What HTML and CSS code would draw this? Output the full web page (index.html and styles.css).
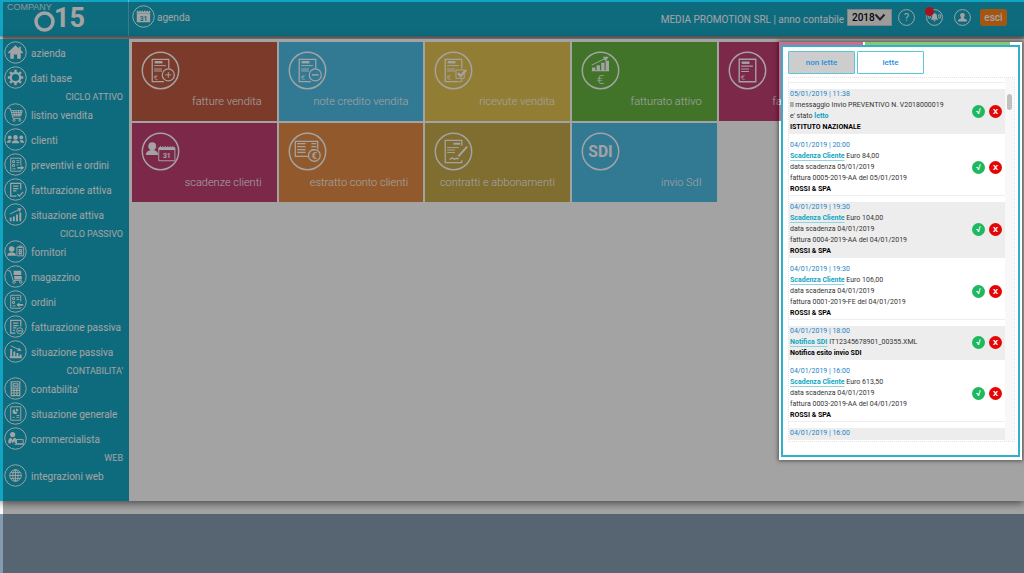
FILE: index.html
```html
<!DOCTYPE html>
<html lang="it">
<head>
<meta charset="utf-8">
<title>Company 015</title>
<link rel="stylesheet" href="styles.css">
</head>
<body>
<svg class="defs" aria-hidden="true">
  <symbol id="ring" viewBox="0 0 24 24"><circle cx="12" cy="12" r="11.2"/></symbol>
  <symbol id="i-cal" viewBox="0 0 24 24"><path class="f" d="M5 6h14v3H5zM5 9.500h14v8.500H5z"/><path class="cut" d="M7 5v2M9.500 5v2M12 5v2M14.500 5v2M17 5v2"/><text class="cutt" x="12" y="16.200" text-anchor="middle" font-size="7">31</text></symbol>
  <symbol id="i-home" viewBox="0 0 24 24"><path class="f" d="M12 4.500 4 12l1 1 1.500-1v6.500H10.300V14h3.400v4.500h3.800V12l1.500 1 1-1-2.500-2.500V6h-2v1.700z"/></symbol>
  <symbol id="i-gear" viewBox="0 0 24 24"><circle cx="12" cy="12" r="4.900" stroke-width="2.300"/><path stroke-width="2.600" d="M12 4v2.500M12 17.500V20M4 12h2.500M17.500 12H20M6.300 6.300l1.800 1.800M15.900 15.900l1.800 1.800M6.300 17.700l1.800-1.800M15.900 8.100l1.800-1.800"/></symbol>
  <symbol id="i-cart" viewBox="0 0 24 24"><path d="M4 5.500h2.500L9.500 16h8M7.300 8H19l-1.700 5.500H9M8 10h10.500M8.500 12H18M10 8l1 5.500M12.500 8l.5 5.500M15 8v5.500M17.300 8l-1 5.500"/><circle cx="10.500" cy="18" r="1.100"/><circle cx="16.500" cy="18" r="1.100"/></symbol>
  <symbol id="i-people" viewBox="0 0 24 24"><g class="f"><circle cx="12" cy="9.800" r="2.400"/><path d="M8 16q0-3 4-3.300 4 .3 4 3.300z"/><circle cx="6" cy="9.800" r="2"/><path d="M3 15.500q0-2.500 3-3 1.500 0 1.600.6-.9 1-1 2.400z"/><circle cx="18" cy="9.800" r="2"/><path d="M21 15.500q0-2.500-3-3-1.500 0-1.600.6.900 1 1 2.400z"/></g></symbol>
  <symbol id="i-quote" viewBox="0 0 24 24"><path d="M17.500 13V5.500H7v13.500h10.500v-1M9 8h2v2H9zM9 12h2v2H9zM13 8h3M13 10h3M13 12.500h2M9 16.500h3"/><path class="f" d="M14 14.500h4V13l3 2.500-3 2.500v-1.500h-4z"/></symbol>
  <symbol id="i-order" viewBox="0 0 24 24"><path d="M17.500 12V5.500H7v13.500h10.500v-1M9 8h2v2H9zM9 12h2v2H9zM13 8h3M13 10h3M9 16.500h3"/><path class="f" d="M20 14.500h-4V13l-3 2.500 3 2.500v-1.500h4z"/></symbol>
  <symbol id="i-inv" viewBox="0 0 24 24"><path stroke-width="1.300" d="M17.500 12V5.500H7v13.500h6M9.500 8.500H15M9.500 11H15M9.500 13.500h3.500M14 17l2 2 4-4.500"/></symbol>
  <symbol id="i-invp" viewBox="0 0 24 24"><path stroke-width="1.300" d="M17.500 12V5.500H7v13.500h5M9.500 8.500H15M9.500 11H15M9.500 13.500h3.500M9.500 16h2M14.500 16.500h4"/><circle cx="16.500" cy="16.500" r="3.200"/></symbol>
  <symbol id="i-up" viewBox="0 0 24 24"><path stroke-width="2" d="M7 19v-4M10.300 19v-5M13.600 19v-7M17 19v-9"/><path d="M6 11.500 15.500 7"/><path class="f" d="m14 5.300 4.500.5-2.500 3.500z"/></symbol>
  <symbol id="i-down" viewBox="0 0 24 24"><path stroke-width="2" d="M7.500 18V9.500M10.800 18v-6M14 18v-4.500M17.300 18v-3M6 18h12.500"/><path d="m7 6 8 3.800"/><path class="f" d="m15.500 7.800 3 3.500-4.500.2z"/></symbol>
  <symbol id="i-supp" viewBox="0 0 24 24"><g class="f"><circle cx="8" cy="9.500" r="2.900"/><path d="M3.500 16.500q0-3 3-3.500h3q3 .5 3 3.500z"/></g><path d="M13.500 7.500h7v9h-7zM15.500 6.300h3v1.500h-3zM15 10h4M15 12h4M15 14h4M16.300 9.500v6M18 9.500v6"/></symbol>
  <symbol id="i-trolley" viewBox="0 0 24 24"><path d="M4 6h2.500L9.500 16H18"/><path class="f" d="M10 6h8v4.500h-8zM10.500 11.500h8V15h-7.500z"/><circle cx="10.500" cy="17.800" r="1.300"/><circle cx="17.500" cy="17.800" r="1.300"/></symbol>
  <symbol id="i-calc" viewBox="0 0 24 24"><path stroke-width="1.200" d="M7.500 5h9v14.500h-9zM9.500 7h5v2.500h-5zM7.500 11.500h9M7.500 14h9M7.500 16.700h9M10.500 11.500v8M13.500 11.500v8"/></symbol>
  <symbol id="i-report" viewBox="0 0 24 24"><path d="M7 5h10.500v14H7zM13 14h3M13 16h3M9 16h2"/><path class="f" d="M11.500 7.500a2.600 2.600 0 1 0 2.600 2.600h-2.600zM12.500 6.700a2.600 2.600 0 0 1 2.600 2.600h-2.600z"/></symbol>
  <symbol id="i-acct" viewBox="0 0 24 24"><g class="f"><circle cx="9" cy="7.800" r="2.700"/><path d="M4.500 17v-3q.5-2.500 3-2.700L9 13.500l1.500-2.200q2 .2 2.800 1.700V17h-2v-2.500L9 17l-1.500-3V17z"/></g><path d="M13 13h7v4.500h-7zM11 18h10"/></symbol>
  <symbol id="i-globe" viewBox="0 0 24 24"><circle cx="12" cy="12" r="6"/><ellipse cx="12" cy="12" rx="2.800" ry="6"/><path d="M6 12h12M12 6v12M7 9h10M7 15h10"/></symbol>
  <symbol id="i-bell" viewBox="0 0 24 24"><path class="f" d="M12 6q3.500.3 3.500 5 0 2.500 1.500 4H7q1.500-1.500 1.500-4 0-4.700 3.500-5zM10.500 16h3q-.3 1.800-1.500 1.800t-1.500-1.800z"/><path d="M6.500 8q-1.500 2.500 0 5M4.500 7q-2 3.500 0 7M17.500 8q1.500 2.500 0 5M19.500 7q2 3.500 0 7"/></symbol>
  <symbol id="i-user" viewBox="0 0 24 24"><path class="f" d="M12 5.500c4.300 0 3.700 4.500 1.700 7 0 1.500 4.800 1.500 4.800 4.500v.8h-13V17c0-3 4.800-3 4.800-4.500-2-2.500-2.600-7 1.700-7z"/></symbol>
  <symbol id="b-doc" viewBox="0 0 40 40"><path stroke-width="1.300" d="M28.500 18V8.500H11.500v23h12"/><path d="M13.500 15h12M13.500 18.500h8M13.500 20.500h8"/><path stroke-width="2.500" d="M14 11.500h8"/><text class="ft" x="13" y="29.500" font-size="8">€</text></symbol>
  <symbol id="b-plus" viewBox="0 0 40 40"><use href="#b-doc"/><circle cx="28" cy="24.500" r="6.200" stroke-width="1.300"/><path d="M28 21.500v6M25 24.500h6"/></symbol>
  <symbol id="b-minus" viewBox="0 0 40 40"><use href="#b-doc"/><circle cx="28" cy="24.500" r="6.200" stroke-width="1.300"/><path stroke-width="1.400" d="M24.500 24.500h7"/></symbol>
  <symbol id="b-check" viewBox="0 0 40 40"><use href="#b-doc"/><path d="M22.500 19.500h8.500v8.500h-8.500zM28.500 28v3.500h-6"/><path stroke-width="2.400" d="m24.500 22.500 2.800 3.200 5.700-6.200"/></symbol>
  <symbol id="b-chart" viewBox="0 0 40 40"><path stroke-width="3.400" d="M13 20.500V17M17.700 20.500v-6M22.400 20.500v-8.500M27 20.500V10"/><path d="M11 20.300h18M11 14.500 24 8"/><path class="f" d="m22.500 6 6-.2-3.500 5z"/><text class="ft" x="20" y="34" font-size="14" text-anchor="middle">€</text></symbol>
  <symbol id="b-bill" viewBox="0 0 40 40"><path stroke-width="1.400" d="M11.500 8.500h17v23h-17z"/><path stroke-width="2.500" d="M14 12h8"/><path stroke-width="1.200" d="M13.500 15.500h12M13.500 18.500h8M13.500 21h8"/><text class="ft" x="13" y="29.500" font-size="8">€</text></symbol>
  <symbol id="b-due" viewBox="0 0 40 40"><g class="f"><circle cx="11.500" cy="14.500" r="4"/><path d="M5 23.500q0-4 5-5h3q4.500 1 4.500 5z"/><path d="M18 15.500h17v3H18z"/></g><path d="M18.200 17h16.600v12.500H18.200zM20 14.500v1.500M22.500 14.500v1.500M25 14.500v1.500M27.500 14.500v1.500M30 14.500v1.500M32.500 14.500v1.500"/><text class="ft b" x="26.500" y="26.500" font-size="7" text-anchor="middle">31</text></symbol>
  <symbol id="b-stmt" viewBox="0 0 40 40"><path stroke-width="1.300" d="M30.500 18V9.500h-23V25h13.500"/><path stroke-width="1.300" d="M9.500 12h8.500M9.500 15h8.500M9.500 18h8.500M9.500 21h8.500M24 12h5M24 15h5M24 18h4"/><circle cx="27" cy="24" r="6" stroke-width="1.300"/><text class="ft b" x="27" y="27.500" font-size="10" text-anchor="middle">€</text></symbol>
  <symbol id="b-sign" viewBox="0 0 40 40"><path stroke-width="1.300" d="M28.500 14V8.500h-17v23h17v-2.500"/><path stroke-width="2.200" d="M20 12h7M25 25l9-10"/><path d="M13.500 16h12M13.500 18.500h8M13.500 21h8"/><path stroke-width="1.400" d="m16 28 3-1.500 1.500 1.500 2.500-1 2.500.5"/></symbol>
  <symbol id="b-sdi" viewBox="0 0 40 40"><text class="ft b" x="20" y="25.500" font-size="16" text-anchor="middle">SDI</text></symbol>
</svg>

<div class="page">
  <header class="topbar">
    <a class="brand" href="#" aria-label="Company 015">
      <svg class="logo" viewBox="0 0 84 36">
        <text x="0" y="10" class="logo-name">COMPANY</text>
        <circle class="logo-o" cx="37.500" cy="21.500" r="8.500"/>
        <text x="47" y="27" class="logo-num">15</text>
      </svg>
    </a>
    <a class="agenda" href="#"><svg class="ico"><use href="#ring"/><use href="#i-cal"/></svg><span>agenda</span></a>
    <div class="tools">
      <label class="year" for="anno">MEDIA PROMOTION SRL | anno contabile</label>
      <span class="pick"><select id="anno"><option>2018</option></select><svg class="chev" viewBox="0 0 12 8"><path d="m1.500 1.500 4.500 5 4.500-5"/></svg></span>
      <button class="tool" aria-label="aiuto"><svg viewBox="0 0 24 24"><use href="#ring"/><text class="ft" x="12" y="17.500" font-size="16" text-anchor="middle">?</text></svg></button>
      <button class="tool" aria-label="notifiche"><svg viewBox="0 0 24 24"><use href="#ring"/><use href="#i-bell"/></svg><i class="dot"></i></button>
      <button class="tool" aria-label="profilo"><svg viewBox="0 0 24 24"><use href="#ring"/><use href="#i-user"/></svg></button>
      <button class="exit">esci</button>
    </div>
  </header>

  <div class="main">
    <nav class="side">
      <a href="#"><svg class="ico"><use href="#ring"/><use href="#i-home"/></svg><span>azienda</span></a>
      <a href="#"><svg class="ico"><use href="#ring"/><use href="#i-gear"/></svg><span>dati base</span></a>
      <h2>CICLO ATTIVO</h2>
      <a href="#"><svg class="ico"><use href="#ring"/><use href="#i-cart"/></svg><span>listino vendita</span></a>
      <a href="#"><svg class="ico"><use href="#ring"/><use href="#i-people"/></svg><span>clienti</span></a>
      <a href="#"><svg class="ico"><use href="#ring"/><use href="#i-quote"/></svg><span>preventivi e ordini</span></a>
      <a href="#"><svg class="ico"><use href="#ring"/><use href="#i-inv"/></svg><span>fatturazione attiva</span></a>
      <a href="#"><svg class="ico"><use href="#ring"/><use href="#i-up"/></svg><span>situazione attiva</span></a>
      <h2>CICLO PASSIVO</h2>
      <a href="#"><svg class="ico"><use href="#ring"/><use href="#i-supp"/></svg><span>fornitori</span></a>
      <a href="#"><svg class="ico"><use href="#ring"/><use href="#i-trolley"/></svg><span>magazzino</span></a>
      <a href="#"><svg class="ico"><use href="#ring"/><use href="#i-order"/></svg><span>ordini</span></a>
      <a href="#"><svg class="ico"><use href="#ring"/><use href="#i-invp"/></svg><span>fatturazione passiva</span></a>
      <a href="#"><svg class="ico"><use href="#ring"/><use href="#i-down"/></svg><span>situazione passiva</span></a>
      <h2>CONTABILITA'</h2>
      <a href="#"><svg class="ico"><use href="#ring"/><use href="#i-calc"/></svg><span>contabilita'</span></a>
      <a href="#"><svg class="ico"><use href="#ring"/><use href="#i-report"/></svg><span>situazione generale</span></a>
      <a href="#"><svg class="ico"><use href="#ring"/><use href="#i-acct"/></svg><span>commercialista</span></a>
      <h2>WEB</h2>
      <a href="#"><svg class="ico"><use href="#ring"/><use href="#i-globe"/></svg><span>integrazioni web</span></a>
    </nav>
    <main class="tiles">
      <a class="tile rust" href="#"><svg class="big"><use class="rim" href="#ring"/><use href="#b-plus"/></svg><span>fatture vendita</span></a>
      <a class="tile sky" href="#"><svg class="big"><use class="rim" href="#ring"/><use href="#b-minus"/></svg><span>note credito vendita</span></a>
      <a class="tile gold" href="#"><svg class="big"><use class="rim" href="#ring"/><use href="#b-check"/></svg><span>ricevute vendita</span></a>
      <a class="tile green" href="#"><svg class="big"><use class="rim" href="#ring"/><use href="#b-chart"/></svg><span>fatturato attivo</span></a>
      <a class="tile plum" href="#"><svg class="big"><use class="rim" href="#ring"/><use href="#b-bill"/></svg><span>fatture acquisto</span></a>
      <a class="tile green" href="#" aria-label="fatturato"></a>
      <a class="tile plum" href="#"><svg class="big"><use class="rim" href="#ring"/><use href="#b-due"/></svg><span>scadenze clienti</span></a>
      <a class="tile orange" href="#"><svg class="big"><use class="rim" href="#ring"/><use href="#b-stmt"/></svg><span>estratto conto clienti</span></a>
      <a class="tile olive" href="#"><svg class="big"><use class="rim" href="#ring"/><use href="#b-sign"/></svg><span>contratti e abbonamenti</span></a>
      <a class="tile sky" href="#"><svg class="big"><use class="rim" href="#ring"/><use href="#b-sdi"/></svg><span>invio SdI</span></a>
    </main>
  </div>
  <footer class="foot"></footer>

  <div class="veil">
    <div class="spot">
      <section class="panel" aria-label="notifiche">
        <div class="tabs"><button class="on">non lette</button><button>lette</button></div>
        <div class="list">
          <div class="rows">
            <article class="note first"><div class="txt"><b>VERDI MARIO</b></div></article>
            <article class="note alt"><div class="txt"><time>05/01/2019 | 11:38</time><p>Il messaggio Invio PREVENTIVO N. V2018000019</p><p>e' stato <strong>letto</strong></p><b>ISTITUTO NAZIONALE</b></div><button class="ok">√</button><button class="no">X</button></article>
            <article class="note"><div class="txt"><time>04/01/2019 | 20:00</time><p><a href="#">Scadenza Cliente</a> Euro 84,00</p><p>data scadenza 05/01/2019</p><p>fattura 0005-2019-AA del 05/01/2019</p><b>ROSSI &amp; SPA</b></div><button class="ok">√</button><button class="no">X</button></article>
            <article class="note alt"><div class="txt"><time>04/01/2019 | 19:30</time><p><a href="#">Scadenza Cliente</a> Euro 104,00</p><p>data scadenza 04/01/2019</p><p>fattura 0004-2019-AA del 04/01/2019</p><b>ROSSI &amp; SPA</b></div><button class="ok">√</button><button class="no">X</button></article>
            <article class="note"><div class="txt"><time>04/01/2019 | 19:30</time><p><a href="#">Scadenza Cliente</a> Euro 106,00</p><p>data scadenza 04/01/2019</p><p>fattura 0001-2019-FE del 04/01/2019</p><b>ROSSI &amp; SPA</b></div><button class="ok">√</button><button class="no">X</button></article>
            <article class="note alt"><div class="txt"><time>04/01/2019 | 18:00</time><p><a href="#">Notifica SDI</a> IT12345678901_00355.XML</p><b>Notifica esito invio SDI</b></div><button class="ok">√</button><button class="no">X</button></article>
            <article class="note"><div class="txt"><time>04/01/2019 | 16:00</time><p><a href="#">Scadenza Cliente</a> Euro 613,50</p><p>data scadenza 04/01/2019</p><p>fattura 0003-2019-AA del 04/01/2019</p><b>ROSSI &amp; SPA</b></div><button class="ok">√</button><button class="no">X</button></article>
            <article class="note alt"><div class="txt"><time>04/01/2019 | 16:00</time></div></article>
          </div>
          <div class="track"><i class="thumb"></i></div>
        </div>
      </section>
    </div>
  </div>
</div>
</body>
</html>
```
FILE: styles.css
```css
* { box-sizing: border-box; }
body { margin: 0; font-family: Roboto, "Liberation Sans", sans-serif; font-size: 10px; }
a { color: inherit; text-decoration: none; }
button { font: inherit; padding: 0; border: 0; background: none; color: inherit; }
p, h2 { margin: 0; }
svg { fill: none; stroke: #fff; stroke-width: 1; display: block; }
text { font-family: Roboto, sans-serif; }
.defs { display: none; }
.f { fill: #fff; stroke: none; }
.ft { fill: #fff; stroke: none; }
.b { font-weight: 700; }
.cut { stroke: #0fa5c3; }
.cutt { fill: #0fa5c3; stroke: none; font-weight: 700; }

.page { position: relative; min-height: 100vh; display: flex; flex-direction: column; background: #fff; overflow: hidden; }
.topbar { display: flex; height: 36px; background: #0fa5c3; color: #fff; box-shadow: 0 1px 4px 1px rgba(0, 0, 0, .6); margin-bottom: 3px; }
.brand { width: 129px; border-right: 1px solid #58bfd4; padding-left: 7px; }
.logo { width: 84px; height: 36px; }
.logo-name { font-family: "Liberation Sans", sans-serif; font-size: 9px; fill: #d5eef4; stroke: none; }
.logo-o { stroke-width: 3.5; }
.logo-num { font-family: "Liberation Sans Narrow", Roboto, sans-serif; font-size: 27px; font-weight: 700; fill: #fff; stroke: none; }
.agenda { display: flex; align-items: center; gap: 2px; padding: 0 0 4px 3px; }
.agenda span { padding-top: 3px; }
.ico { width: 23px; height: 23px; flex: none; }
.tools { margin-left: auto; display: flex; align-items: center; padding: 0 17px 2px 0; }
.year { padding: 4px 3px 0 0; }
.pick { position: relative; margin-right: 6px; }
.pick select { appearance: none; display: block; width: 45px; height: 17px; padding: 0 0 0 4px; border: 1px solid #ccc; border-radius: 0; background: #f4f4f4; color: #000; font: 500 10px Roboto, sans-serif; }
.chev { position: absolute; right: 6px; top: 4px; width: 12px; height: 8px; stroke: #333; stroke-width: 2; pointer-events: none; }
.tool { position: relative; width: 17px; height: 17px; margin-right: 11px; }
.tool svg { width: 17px; height: 17px; stroke-width: 1.4; }
.dot { position: absolute; left: -1px; top: -2px; width: 9px; height: 9px; border-radius: 50%; background: #ff1830; }
.exit { width: 27px; height: 17px; margin-left: -2px; border-radius: 3px; background: #ff8416; font-weight: 500; }

.main { display: flex; box-shadow: 0 2px 8px rgba(0, 0, 0, .6); background: #fff; }
.side { width: 129px; padding: 1px 6px 13px 4px; background: #0fa5c3; color: #fff; }
.side a { display: flex; align-items: center; gap: 4px; height: 25px; white-space: nowrap; }
.side span { padding-top: 2px; }
.side h2 { height: 12px; line-height: 15px; font-size: 9px; font-weight: 400; text-align: right; }
.tiles { flex: 1; display: grid; grid-template-columns: repeat(6, 1fr); grid-auto-rows: 79px; align-content: start; gap: 2px; padding: 3px 14px 0 3px; color: #fff; font-weight: 300; }
.tile { display: flex; flex-direction: column; justify-content: space-between; padding: 9px 15px 11px 9px; white-space: nowrap; }
.tile span { align-self: flex-end; line-height: 16px; font-size: 11px; }
.big { width: 39px; height: 39px; }
.rim { stroke-width: .9; }
.rust { background: #bf563c; }
.sky { background: #49bde7; }
.gold { background: #e4c24c; }
.green { background: #61b43b; }
.plum { background: #c1396d; }
.orange { background: #e48a40; }
.olive { background: #c7a846; }
.foot { flex: 1; margin-top: 13px; background: #839baf; position: relative; }

.veil { position: absolute; inset: 2px 0 0 3px; overflow: hidden; }
.spot { position: absolute; top: 40px; right: 2px; padding: 3px 2px 3px 2px; width: 243px; background: rgba(255, 255, 255, .25); box-shadow: 0 0 0 2000px rgba(12, 12, 12, .38), 0 0 4px 1px rgba(0, 0, 0, .5); }
.panel { border: 2px solid #2fb0cb; background: #fff; padding: 4px 3px 13px 5px; }
.tabs { display: flex; gap: 2px; margin-bottom: 3px; color: #1e8fdc; font-size: 8px; font-weight: 500; }
.tabs button { width: 67px; height: 23px; border: 1px solid #5cc5d8; border-radius: 1px; }
.tabs .on { background: #cdcdcd; }
.list { display: flex; height: 365px; border: 1px dotted #e2e2e2; overflow: hidden; font-size: 7px; line-height: 11px; color: #333; }
.rows { flex: 1; display: flex; flex-direction: column; gap: 6px; }
.note { display: flex; align-items: center; flex: none; gap: 4px; padding: 0 3px 0 1px; border-bottom: 1px solid #eee; }
.note.alt { background: #ededed; }
.first { margin-top: -7px; }
.txt { flex: 1; white-space: nowrap; }
.txt time, .txt b { display: block; }
.txt time { color: #2183c4; }
.txt b { color: #000; }
.txt a, .txt strong { color: #0fa5c3; font-weight: 700; }
.txt a { text-decoration: underline; text-decoration-color: #8fd3e2; text-decoration-thickness: 1px; text-underline-offset: 2px; }
.ok, .no { width: 13px; height: 13px; border-radius: 50%; color: #fff; font-size: 8px; line-height: 13px; font-weight: 700; }
.ok { background: #1fb861; }
.no { background: #e60505; }
.track { width: 9px; background: #f8f8f8; padding: 16px 2px 0; }
.thumb { display: block; width: 5px; height: 16px; border-radius: 3px; background: #c0c0c0; }
```
